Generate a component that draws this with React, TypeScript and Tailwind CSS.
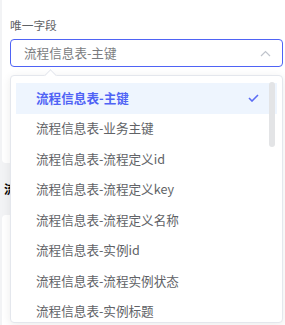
import React from "react";

const options = [
    "流程信息表-主键",
    "流程信息表-业务主键",
    "流程信息表-流程定义id",
    "流程信息表-流程定义key",
    "流程信息表-流程定义名称",
    "流程信息表-实例id",
    "流程信息表-流程实例状态",
    "流程信息表-实例标题",
];

const App = () => {
    const selected = 0;

    return (
        <div
            className="relative w-[285px] h-[325px] overflow-hidden bg-white"
            style={{fontFamily: '"Noto Sans CJK SC", "Noto Sans", sans-serif'}}
        >
            {/* page behind the popper */}
            <div className="absolute left-0 top-0 w-[10px] h-[325px] bg-[#f2f3f5]">
                <div className="h-[163px] ml-[2px] bg-white rounded-bl-[4px]"/>
                <div className="mt-[19px] ml-[4px] text-[12px] font-bold leading-[14px] text-black">流</div>
                <div className="mt-[19px] ml-[2px] h-[120px] bg-white rounded-tl-[4px]"/>
            </div>

            <div className="relative pl-[10px] pr-[2px] pt-[16px]">
                <div className="text-[11.7px] leading-[18px] text-[#5f6266]">唯一字段</div>
                <div className="mt-[5px] h-[28px] flex items-center justify-between border border-[#4f63f5] rounded-[4px] pl-[13px] pr-[11px]">
                    <span className="text-[12.6px] text-[#7a7c80]">流程信息表-主键</span>
                    <svg width="11" height="7" viewBox="0 0 11 7" fill="none">
                        <path d="M1 6L5.5 1.5L10 6" stroke="#c0c4cc" strokeWidth="1.2"/>
                    </svg>
                </div>
            </div>

            {/* dropdown */}
            <div className="absolute left-[10px] top-[75px] w-[273px] h-[248px] bg-white border border-[#e4e7ed] rounded-[4px] shadow-[0_2px_10px_rgba(0,0,0,0.08)]">
                <div className="absolute left-[35px] -top-[5px] w-[9px] h-[9px] rotate-45 bg-white border-l border-t border-[#e4e7ed]"/>
                <div className="pt-[7px] px-[5px]">
                    {options.map((opt, i) => (
                        <div
                            key={opt}
                            className={
                                i === selected
                                    ? "h-[30.5px] flex items-center justify-between pl-[20px] pr-[18px] bg-[#eef5fe] text-[#4f63f5] font-bold text-[12.6px]"
                                    : "h-[30.5px] flex items-center pl-[20px] text-[#606266] text-[12.6px]"
                            }
                        >
                            <span>{opt}</span>
                            {i === selected && (
                                <svg width="11" height="8" viewBox="0 0 11 8" fill="none">
                                    <path d="M1 4L4 7L10 1" stroke="#5b6cf5" strokeWidth="1.6"/>
                                </svg>
                            )}
                        </div>
                    ))}
                </div>
                <div className="absolute right-[7px] top-[6px] w-[6px] h-[65px] rounded-full bg-[#e3e4e6]"/>
            </div>
        </div>
    );
};

export default App;
